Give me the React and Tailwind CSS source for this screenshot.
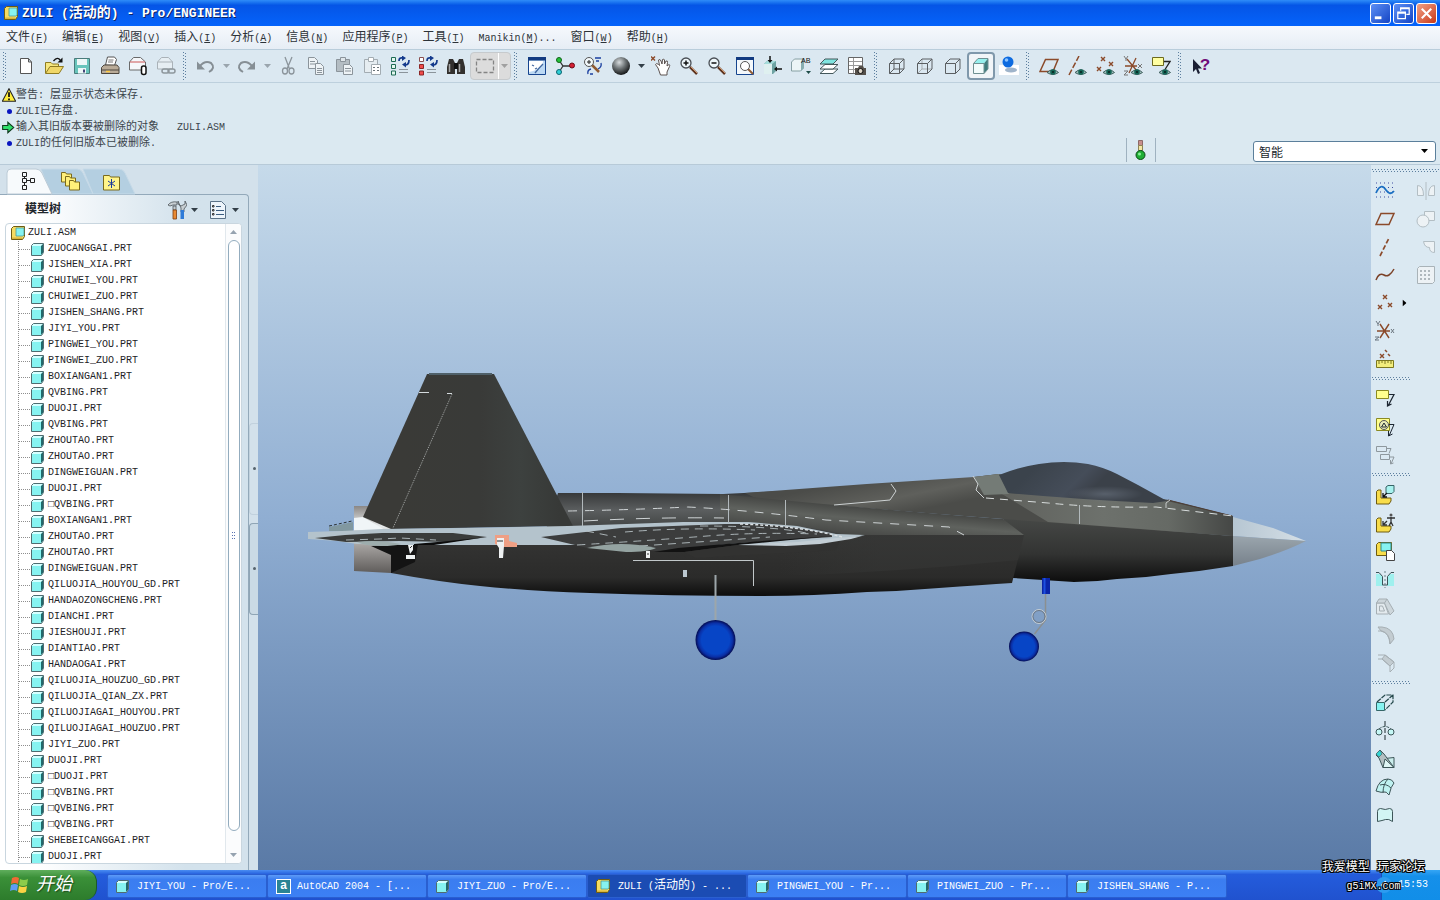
import { Fragment } from 'react';

const parts = [
  'ZUOCANGGAI.PRT', 'JISHEN_XIA.PRT', 'CHUIWEI_YOU.PRT', 'CHUIWEI_ZUO.PRT', 'JISHEN_SHANG.PRT',
  'JIYI_YOU.PRT', 'PINGWEI_YOU.PRT', 'PINGWEI_ZUO.PRT', 'BOXIANGAN1.PRT', 'QVBING.PRT',
  'DUOJI.PRT', 'QVBING.PRT', 'ZHOUTAO.PRT', 'ZHOUTAO.PRT', 'DINGWEIGUAN.PRT',
  'DUOJI.PRT', '□QVBING.PRT', 'BOXIANGAN1.PRT', 'ZHOUTAO.PRT', 'ZHOUTAO.PRT',
  'DINGWEIGUAN.PRT', 'QILUOJIA_HOUYOU_GD.PRT', 'HANDAOZONGCHENG.PRT', 'DIANCHI.PRT', 'JIESHOUJI.PRT',
  'DIANTIAO.PRT', 'HANDAOGAI.PRT', 'QILUOJIA_HOUZUO_GD.PRT', 'QILUOJIA_QIAN_ZX.PRT', 'QILUOJIAGAI_HOUYOU.PRT',
  'QILUOJIAGAI_HOUZUO.PRT', 'JIYI_ZUO.PRT', 'DUOJI.PRT', '□DUOJI.PRT', '□QVBING.PRT',
  '□QVBING.PRT', '□QVBING.PRT', 'SHEBEICANGGAI.PRT', 'DUOJI.PRT',
];

const menus = [
  ['文件', 'F'], ['编辑', 'E'], ['视图', 'V'], ['插入', 'I'], ['分析', 'A'], ['信息', 'N'],
  ['应用程序', 'P'], ['工具', 'T'], ['Manikin', 'M', '...'], ['窗口', 'W'], ['帮助', 'H'],
];

// Latin runs are set smaller than the Chinese ones so that two of them fill one ideograph
const Mixed = ({ text, latin = 'text-[10px]' }) => (
  <span className="whitespace-pre">
    {text.split(/([\x20-\x7e□]+)/).filter(Boolean).map((run, i) => (
      <span key={i} className={/[\x20-\x7e□]/.test(run) ? latin : ''}>{run}</span>
    ))}
  </span>
);

const Svg = ({ children, size = 20, ...rest }) => (
  <svg width={size} height={size} viewBox="0 0 20 20" fill="none" className="shrink-0" aria-hidden="true" {...rest}>
    {children}
  </svg>
);

const PartIcon = ({ className = 'w-[13px] h-[13px]' }) => (
  <svg viewBox="0 0 13 13" className={`shrink-0 ${className}`} aria-hidden="true">
    <path d="M.5 2.500 2.500.5h10v9l-2 3H.5z" fill="#d5ffff" stroke="#4f6c70" />
    <path d="M1 3h9v9H1z" fill="#86f3f1" />
    <path d="M10 3 12 1v8.500L10 12z" fill="#22686b" />
  </svg>
);

const AsmIcon = ({ className = 'w-[14px] h-[14px]' }) => (
  <svg viewBox="0 0 14 14" className={`shrink-0 ${className}`} aria-hidden="true">
    <path d="M.5 2.500 2.500.5h11v10l-2 3H.5z" fill="#f5dc62" stroke="#6e5c12" />
    <path d="M5 2h8v7l-1 1H5z" fill="#86f3f1" stroke="#4f9a98" strokeWidth=".8" />
    <path d="M1 11.500h10V13H1z" fill="#d9b63c" />
  </svg>
);

const Eye = () => (
  <g>
    <path d="M8 16.500Q14 11 19.500 16.500 14 20.500 8 16.500z" fill="#9fc0bd" stroke="#41605f" />
    <circle cx="14" cy="16" r="2.800" fill="#146455" />
    <circle cx="14" cy="16" r="1" fill="#06201c" />
  </g>
);

const Cross = ({ x, y, c = '#8b4a2a' }) => (
  <path d={`M${x - 2} ${y - 2}l4 4m0-4l-4 4`} stroke={c} strokeWidth="1.400" />
);

const Lens = ({ x, y }) => (
  <g>
    <path d={`M${x + 4} ${y + 4}l7 7`} stroke="#5d3420" strokeWidth="2.500" />
    <path d={`M${x + 5} ${y + 4}l6 6`} stroke="#d29a70" />
    <circle cx={x} cy={y} r="5" fill="#eef6fa" stroke="#4a4f55" strokeWidth="1.300" />
  </g>
);

const Refresh = () => (
  <g>
    <path d="M9 5q0-4 4-3M19 4q0 5-4 5" stroke="#143a8c" strokeWidth="1.700" />
    <path d="m12-.5 4 2.500-4 3zM16 6l-4 2.500 4 3z" fill="#143a8c" />
    <path d="M9 13.500h9M9 16.500h9" stroke="#8b949b" />
  </g>
);

const icons = {
  fresh: <path d="M4.500 2.500h8l3 3.500v11.500h-11zM12.500 2.500V6h3" fill="#fff" stroke="#555" />,
  open: (
    <>
      <path d="M1.500 17V6.500H7L8.500 8h6v3" fill="#f6e780" stroke="#8f7c22" />
      <path d="m1.500 17.500 4.500-7h13.500l-4.500 7z" fill="#f0d768" stroke="#8f7c22" />
      <path d="M9.500 5q4-5 7-.5" stroke="#111" strokeWidth="1.300" />
      <path d="M18.500 1.500v5h-5z" fill="#111" />
    </>
  ),
  save: (
    <>
      <path d="M2.500 2.500h15v15h-15z" fill="#69c4bb" stroke="#4a7b7b" />
      <path d="M5 3h10v6H5zM6 12h8v5.500H6z" fill="#eef7f7" />
      <path d="M11 13.500h2v3h-2z" fill="#447" />
    </>
  ),
  print: (
    <>
      <path d="m5.500 9 2-8h7l2 2.500-2 6z" fill="#fff" stroke="#555" />
      <path d="M8.500 4h5M8 6h5" stroke="#777" />
      <path d="M1.500 11.500 4 9h13l2 2.500v6H1.500z" fill="#b9ab98" stroke="#4d463e" />
      <path d="M2 14h17" stroke="#4d463e" />
      <path d="M6 15.500h4" stroke="#fc4" strokeWidth="1.500" />
    </>
  ),
  attach: (
    <>
      <path d="m1.500 6 4-4.500h7l5 4.500v8h-16z" fill="#f5f7fa" stroke="#6a6a6a" />
      <path d="M2 6h15" stroke="#c55" />
      <rect x="13.500" y="10" width="4.500" height="8.500" rx="2" fill="#fff" stroke="#111" strokeWidth="1.500" />
    </>
  ),
  mailLink: (
    <>
      <path d="m1.500 6 4-4.500h7l4 4.500v7h-15z" fill="#e6eef3" stroke="#aab2b8" />
      <path d="M2 6h15" stroke="#aab2b8" />
      <rect x="6" y="13" width="7" height="4" rx="2" stroke="#8d969c" strokeWidth="1.500" />
      <rect x="12" y="13" width="7" height="4" rx="2" stroke="#8d969c" strokeWidth="1.500" />
    </>
  ),
  undo: (
    <>
      <path d="M4 10q5-6 11-3 5 5-2 9" stroke="#868f95" strokeWidth="2" />
      <path d="M1 5.500v8h8z" fill="#868f95" />
    </>
  ),
  redo: (
    <>
      <path d="M16 10Q11 4 5 7q-5 5 2 9" stroke="#868f95" strokeWidth="2" />
      <path d="M19 5.500v8h-8z" fill="#868f95" />
    </>
  ),
  cut: (
    <g stroke="#8b949b" strokeWidth="1.300">
      <path d="m7 1 4.500 12M14 1 9 13" />
      <ellipse cx="7" cy="15" rx="2.500" ry="3" />
      <ellipse cx="13.500" cy="15" rx="2.500" ry="3" />
    </g>
  ),
  copy: (
    <g stroke="#8b949b" fill="#eef3f6">
      <path d="M2.500 1.500h6l3 3v8h-9zM4 5.500h5M4 8h5" />
      <path d="M9.500 7.500h5l3 3v8h-8zM11 12.500h5M11 14.500h5M11 16.500h5" />
    </g>
  ),
  paste: (
    <g stroke="#8b949b">
      <path d="M2.500 3.500h13v12h-13z" fill="#b4bdc3" />
      <path d="M6.500 1.500h5v4h-5z" fill="#dfe6ea" />
      <path d="M9.500 8.500h6l3 3v7h-9zM11 12.500h6M11 15h6" fill="#eef3f6" />
    </g>
  ),
  pasteSpecial: (
    <g stroke="#a3acb2">
      <path d="M2.500 3.500h13v13h-13z" fill="#e6edf1" />
      <path d="M6.500 1.500h5v4h-5z" fill="#fff" />
      <path d="M9.500 8.500h9v10h-9z" fill="#fff" />
      <path d="M11 11.500h2M11 14.500h2M15 11.500h2M15 14.500h2" stroke="#6b747a" />
    </g>
  ),
  regen: (
    <>
      <path d="M1.500 1.500h4v4h-4zM1.500 8.500h4v4h-4zM1.500 15h4v4h-4z" fill="#e4f7ef" stroke="#1e6b54" />
      <Refresh />
    </>
  ),
  regenManage: (
    <>
      <path d="M1.500 1.500h4v4h-4z" fill="#fff" stroke="#8a5050" />
      <path d="M1.500 8.500h4v4h-4zM1.500 15h4v4h-4z" fill="#ef4b4b" stroke="#8c2626" />
      <Refresh />
    </>
  ),
  find: (
    <>
      <path d="M3 3h4l2 4v11H1v-7zM17 3h-4l-2 4v11h8v-7z" fill="#33302e" />
      <path d="M8 7h4v6H8z" fill="#111" />
      <path d="M3.500 8v8M13.500 8v8" stroke="#a9a9a9" strokeWidth="1.500" />
    </>
  ),
  select: <path d="M1.500 3.500h17v13h-17z" stroke="#848484" strokeWidth="1.300" strokeDasharray="4 2" />,
  repaint: (
    <>
      <path d="M1.500 1.500h17v17h-17z" fill="#bcd9f4" stroke="#16458f" />
      <path d="M1 1h18v3.500H1z" fill="#123a80" />
      <path d="M2 5h14q0 8-14 11z" fill="#fff" />
      <path d="M8 17q3-4 8-9M5 9l2 1m1 3 2-1" stroke="#4268a0" strokeWidth="1.300" />
    </>
  ),
  spin: (
    <>
      <path d="m4 4 4 6h9M8 10l-4 6" stroke="#333" strokeWidth="1.300" />
      <circle cx="4" cy="4" r="2.500" fill="#22c43a" stroke="#106018" />
      <circle cx="17" cy="9.500" r="2.500" fill="#d42034" stroke="#6d0c18" />
      <circle cx="4" cy="16" r="2.500" fill="#2fd0d8" stroke="#0e6470" />
    </>
  ),
  orient: (
    <>
      <path d="m9 9 7 7" stroke="#8f5b34" strokeWidth="2.500" />
      <circle cx="6" cy="6" r="4.500" fill="#f2f8fb" stroke="#555" />
      <path d="M6 4v4M4 6h4" stroke="#222" />
      <path d="M12 2h6M13 5h3M18 7q1 4-3 6M5 18q-1-4 3-5M10 18h-3" stroke="#1b3fa0" strokeWidth="1.300" />
    </>
  ),
  ball: (
    <>
      <defs>
        <radialGradient id="ball" cx=".4" cy=".3" r=".7">
          <stop offset="0" stopColor="#d8dcde" /><stop offset=".5" stopColor="#6d7375" /><stop offset="1" stopColor="#151718" />
        </radialGradient>
      </defs>
      <circle cx="10" cy="10" r="9" fill="url(#ball)" />
    </>
  ),
  pan: (
    <>
      <Cross x={2} y={2.5} />
      <path d="M7 12 4.500 8.500q1-2 3 0l1 1L7.500 4q1.500-1.500 2.500 1l1 3 .5-4.500q1.500-1 2 .5v4l1.500-3q2-.5 1.500 1.500L16 10l2-1.500q1.500.5.500 2L16 16v3H9.500z" fill="#fff" stroke="#5c5250" />
    </>
  ),
  zoomIn: <><Lens x={7} y={7} /><path d="M7 4.500v5M4.500 7h5" stroke="#111" strokeWidth="1.500" /></>,
  zoomOut: <><Lens x={7} y={7} /><path d="M4.500 7h5" stroke="#111" strokeWidth="1.500" /></>,
  refit: (
    <>
      <path d="M1.500 1.500h17v17h-17z" fill="#f4f8fb" stroke="#16458f" />
      <path d="M1 1h18v3H1z" fill="#123a80" />
      <path d="m13 13 5 5" stroke="#8f5b34" strokeWidth="2" />
      <circle cx="10" cy="10" r="4.500" stroke="#555" fill="#fff" />
    </>
  ),
  reorient: (
    <>
      <path d="m1 8 3-3h9v10l-3 3H1z" fill="#6fa3a3" />
      <path d="m1 8 3-3h9l-4 3z" fill="#a5dcdb" />
      <path d="M1 8h8v10H1z" fill="#dff0f0" />
      <path d="M7 0v4M19 13h-5" stroke="#111" strokeWidth="1.500" />
      <path d="M4.500 4h5L7 7zM14 10.500v5L11 13z" fill="#111" />
    </>
  ),
  saved: (
    <>
      <path d="m.5 6 3-3h9v9l-3 3h-9z" fill="#ecf5f6" stroke="#87a0a4" />
      <path d="m10 6 3-3v9l-3 3z" fill="#88adb0" />
      <text x="10" y="7" className="text-[8px]" fill="#222">AB</text>
      <path d="M15 15h5l-2.500 3z" fill="#1e4c48" />
    </>
  ),
  layers: (
    <g stroke="#44585b">
      <path d="m1 17.500 5-4.500h13l-5 4.500z" fill="#fff" />
      <path d="m1 13 5-4.500h13L14 13z" fill="#fff" />
      <path d="m1 8 5-5h13l-5 5z" fill="#7fe4df" />
    </g>
  ),
  viewMgr: (
    <>
      <path d="M1.500 1.500h14v16h-14z" fill="#fff" stroke="#666" />
      <path d="M2 5.500h13M2 9.500h13M2 13.500h13M6.500 2v15" stroke="#999" />
      <path d="M8 12h3l1-2h4l1 2h2v7H8z" fill="#55504a" />
      <circle cx="13.500" cy="15" r="2.500" fill="#ded6c8" stroke="#111" />
    </>
  ),
  wire: <path d="M2.500 7.500h10v10h-10zM7 3h10v10H7zM2.500 7.500 7 3M12.500 7.500 17 3M12.500 17.500 17 13M2.500 17.500 7 13" stroke="#5b5f62" />,
  hidden: (
    <>
      <path d="M7 3v10h10M2.500 17.500 7 13" stroke="#a7adb1" />
      <path d="M2.500 7.500h10v10h-10zM2.500 7.500 7 3h10v10l-4.500 4.500M12.500 7.500 17 3" stroke="#5b5f62" />
    </>
  ),
  noHidden: <path d="M2.500 7.500h10v10h-10zM2.500 7.500 7 3h10v10l-4.500 4.500M12.500 7.500 17 3" stroke="#5b5f62" />,
  shade: (
    <>
      <path d="m2.500 7.500 4.500-5h10l-4 5z" fill="#96f0ee" />
      <path d="m13 7.500 4-5V13l-4 4.500z" fill="#3f7d7e" />
      <path d="M2.500 7.500H13v10H2.500z" fill="#f2fbfb" stroke="#6f9092" />
      <path d="m2.500 7.500 4.500-5h10V13l-4 4.500" stroke="#6f9092" />
    </>
  ),
  enhanced: (
    <>
      <path d="M0 9h20v10H0z" fill="#fff" />
      <ellipse cx="12" cy="14" rx="6" ry="2.500" fill="#9fb4ca" />
      <circle cx="9" cy="6" r="5.500" fill="#0d6be0" />
      <circle cx="7.500" cy="4" r="1.800" fill="#8cc4ff" />
    </>
  ),
  planeEye: <><path d="M1 15.500 6.500 3.500H19L14 15.500z" stroke="#8b4a2a" strokeWidth="1.500" /><Eye /></>,
  axisEye: <><path d="m2 19 10-19" stroke="#8b4a2a" strokeWidth="1.500" strokeDasharray="6 2" /><Eye /></>,
  pointEye: <><Cross x={8} y={3} /><Cross x={16} y={8} /><Cross x={4} y={13} /><Eye /></>,
  csysEye: (
    <>
      <path d="m4 3 10 12M13 2 6 17M2 10h12" stroke="#8b4a2a" strokeWidth="1.300" />
      <path d="m1 0 2 3 2-3M3 3v2M15 8l4 4m0-4-4 4M1 15h4l-4 4h4" stroke="#777" />
      <Eye />
    </>
  ),
  noteEye: (
    <>
      <path d="M1.500 1.500h11v8h-11z" fill="#ffffa2" stroke="#6d6a1e" />
      <path d="M13 5.500h6l-5 8" stroke="#222" strokeWidth="1.300" />
      <Eye />
    </>
  ),
  help: (
    <>
      <path d="M2 3v13l3-3 2 5 2-1-2-4.500h4z" fill="#1a1f33" />
      <text x="9" y="14" className="text-[17px] font-bold" fill="#6f0c78">?</text>
    </>
  ),
};

const side = {
  sketch: (
    <>
      <path d="M1 2h18M1 6.500h18M1 11h18M1 16h18" stroke="#3c4ca0" strokeDasharray="1 3" />
      <path d="M1 12q5-11 10-3 4 6 8 1" stroke="#1b6fc2" strokeWidth="1.800" />
    </>
  ),
  plane: <path d="M1 15.500 6 4.500h13l-5 11z" stroke="#8b4a2a" strokeWidth="1.500" />,
  axis: <path d="m5 19 9-18" stroke="#8b4a2a" strokeWidth="1.700" strokeDasharray="5 2" />,
  curve: <path d="M1 15q3-8 8-5t10-6" stroke="#7b4228" strokeWidth="1.500" />,
  points: <><Cross x={10} y={4} /><Cross x={5} y={14} /><Cross x={15} y={12} /></>,
  csys: (
    <>
      <path d="m5 3 9 14M14 3 5 17M2 10h13" stroke="#8b4a2a" strokeWidth="1.400" />
      <path d="m1 0 2 3 2-3M3 3v2M16 8l3 4m0-4-3 4M0 16h4l-4 3h4" stroke="#6c7780" />
    </>
  ),
  analysis: (
    <>
      <Cross x={7} y={7} /><path d="m10 1 2 2M13 5l2 2" stroke="#8b4a2a" strokeWidth="1.500" />
      <path d="M1.500 11.500h17v7h-17z" fill="#f3ee7c" stroke="#7c7820" />
      <path d="M4 12v3M7 12v2M10 12v3M13 12v2M16 12v3" stroke="#7c7820" />
    </>
  ),
  note: (
    <>
      <path d="M1.500 1.500h12v8h-12z" fill="#ffff8e" stroke="#8b8a22" />
      <path d="M14 5.500h5L13 17M12.500 12v5l4-2" stroke="#1b2530" strokeWidth="1.200" />
    </>
  ),
  noteFind: (
    <>
      <path d="M1.500 1.500h13v12h-13z" fill="#ffff8e" stroke="#8b8a22" />
      <circle cx="9" cy="8" r="4.500" stroke="#555" fill="#e8ecb8" />
      <path d="m6.500 10 2.500-4 2.500 4zM14 7.500h5L14 19M13.500 14v5l4-2" stroke="#1b2530" />
    </>
  ),
  notes: <path d="M1.500 1.500h10v5h-10zM5.500 9.500h9v5h-9zM12 3.500h4l-2 5M15 12h4l-3 7M15.500 15v4l3-1" stroke="#8e989e" />,
  assemble: (
    <>
      <path d="M1.500 6.500 3 5h3v8h10v3l-2 3H1.500z" fill="#f8dd4b" stroke="#6e5c12" />
      <path d="m11 2 2-1.500h6v6l-2 2h-6z" fill="#a8f2ef" stroke="#376466" />
      <path d="m12 8-4 4m0-4v4h4" stroke="#111" strokeWidth="1.300" />
    </>
  ),
  manikin: (
    <>
      <path d="M1.500 6.500 3 5h3v8h10v3l-2 3H1.500z" fill="#f8dd4b" stroke="#6e5c12" />
      <circle cx="16" cy="2" r="1.500" fill="#555" />
      <path d="M12 5h8M16 4v5l-2 4M16 9l2 4M12 8l-4 4m0-4v4h4" stroke="#333" strokeWidth="1.300" />
    </>
  ),
  create: (
    <>
      <path d="m1.500 3.500 2-2h13v10l-2 3h-13z" fill="#f8dd4b" stroke="#6e5c12" />
      <path d="M6 2h10v8H6z" fill="#86f3f1" stroke="#2f8a8c" />
      <path d="M11.500 9.500h5l3 3v7h-8z" fill="#fff" stroke="#444" />
    </>
  ),
  hole: (
    <>
      <path d="M1 5h4l3 3v9H1zM19 5h-4l-3 3v9h7z" fill="#9ff0ee" />
      <path d="M1 3.500h3l3.500 4V16h5V7.500l3.500-4h3" stroke="#3c5358" />
      <path d="M10 2v17" stroke="#6a8489" strokeDasharray="2 2" />
    </>
  ),
  shell: (
    <g stroke="#a6afb4">
      <path d="M1.500 6h8l4 11h-12z" fill="#e3eaee" />
      <path d="M4 2h8l7 12-4 4L9.500 6H1.500zM12 2 9.500 6" fill="#cdd6db" />
      <path d="M4.500 9h3l2 5h-5z" />
    </g>
  ),
  round: (
    <g stroke="#a6afb4">
      <path d="M3 2h4q11 1 12 12l-4 5q0-11-9-13z" fill="#c3ccd1" />
      <path d="M3 6h4q7 2 8 13" />
    </g>
  ),
  chamfer: (
    <g stroke="#a6afb4">
      <path d="M10 2 7 6l8 7 4-4z" fill="#c3ccd1" />
      <path d="M3 2h7l9 7v6l-4 4v-6L7 6H3" />
    </g>
  ),
  extrude: (
    <>
      <path d="m2 9 8-7h8v7l-8 8M10 9l8-7" stroke="#24484b" strokeWidth="1.200" strokeDasharray="5 1" />
      <path d="M1.500 9.500h8v8h-8z" fill="#86f3f1" stroke="#356769" />
    </>
  ),
  revolve: (
    <>
      <path d="M10 0v20" stroke="#1d2a2e" strokeDasharray="5 2" />
      <circle cx="4" cy="11" r="3" fill="#c5f8f6" stroke="#3d5659" /><circle cx="16" cy="11" r="3" fill="#c5f8f6" stroke="#3d5659" />
      <path d="M4 8q6-5 12 0" stroke="#3d5659" strokeDasharray="3 1" />
    </>
  ),
  sweep: (
    <>
      <path d="M10 9.500 19 8.500v10H8z" fill="#cbeeed" stroke="#3d5659" />
      <path d="M1 6 4 9l4 9.500h11L9 5 5 1z" fill="#b3bfc2" stroke="#3d5659" />
      <path d="m10 10 9 8.500H8z" fill="#dff6f5" stroke="#3d5659" />
      <path d="m1 5 4-4 2 4-3 3z" fill="#34d3d2" stroke="#3d5659" strokeWidth=".6" />
    </>
  ),
  boundary: <path d="M1 14Q4 2 13 2q4 0 6 4-3 3-5 12-3-4-5-3t-8-1zM5 8q6-2 11 3M8 16q0-9 5-14" fill="#bff2f1" stroke="#3d5659" />,
  fill: <path d="M2.500 16.500v-10q0-3 3-3 5 2 9 0 3 0 3 3v10q-4-3-7-2t-8 2z" fill="#d2f5f4" stroke="#3d5659" />,
  mirror: <path d="M10 1v18M1.500 4.500q6 0 6 10h-6zM18.500 4.500q-6 0-6 10h6z" fill="#edf2f5" stroke="#b3bec4" />,
  merge: <><path d="M8.500 2.500h10v9h-10z" fill="#edf2f5" stroke="#b3bec4" /><circle cx="7" cy="12" r="6" fill="#edf2f5" stroke="#b3bec4" /></>,
  trim: <path d="M7.500 4.500h11v11q-5 0-5-5-5 0-6-6z" fill="#edf2f5" stroke="#b3bec4" />,
  pattern: (
    <>
      <path d="m1.500 3.500 2-2h15v15l-2 2h-15z" fill="#edf2f5" stroke="#a9b3b8" />
      <path d="M4 6h12M4 10h12M4 14h12" stroke="#9ba5aa" strokeWidth="1.500" strokeDasharray="2 2" />
    </>
  ),
};

const toolbar = [
  ['新建', 'fresh'], ['打开', 'open'], ['保存', 'save'], ['打印', 'print'], ['发送附件', 'attach'], ['发送链接', 'mailLink', 'off'],
  'grip',
  ['撤消', 'undo', 'off'], 'arrowOff', ['重做', 'redo', 'off'], 'arrowWide', ['剪切', 'cut', 'off'], ['复制', 'copy', 'off'],
  ['粘贴', 'paste', 'off'], ['选择性粘贴', 'pasteSpecial', 'off'], ['再生', 'regen'], ['再生管理器', 'regenManage'], ['查找', 'find'], 'select',
  'grip',
  ['重画', 'repaint'], ['旋转中心', 'spin'], ['定向模式', 'orient'], ['外观库', 'ball'], 'arrow', ['平移', 'pan'], ['放大', 'zoomIn'],
  ['缩小', 'zoomOut'], ['重新调整', 'refit'], ['重定向', 'reorient'], ['已命名视图', 'saved'], ['层', 'layers'], ['视图管理器', 'viewMgr'],
  'grip',
  ['线框', 'wire'], ['隐藏线', 'hidden'], ['消隐', 'noHidden'], ['着色', 'shade', 'on'], ['增强的真实感', 'enhanced'],
  'grip',
  ['基准平面开/关', 'planeEye'], ['基准轴开/关', 'axisEye'], ['基准点开/关', 'pointEye'], ['坐标系开/关', 'csysEye'], ['注释开/关', 'noteEye'],
  'grip',
  ['上下文帮助', 'help'],
];

const sideGroups = [
  [['草绘', 'sketch'], ['平面', 'plane'], ['轴', 'axis'], ['曲线', 'curve'], ['点', 'points'], ['坐标系', 'csys'], ['分析', 'analysis']],
  [['注释', 'note'], ['查找注释', 'noteFind'], ['全部注释', 'notes']],
  [['装配', 'assemble'], ['人体模型', 'manikin'], ['创建', 'create'], ['孔', 'hole'], ['壳', 'shell'], ['倒圆角', 'round'], ['倒角', 'chamfer']],
  [['拉伸', 'extrude'], ['旋转', 'revolve'], ['扫描', 'sweep'], ['边界混合', 'boundary'], ['填充', 'fill']],
];

const tasks = [
  ['part', 'JIYI_YOU - Pro/E...'], ['cad', 'AutoCAD 2004 - [...'], ['part', 'JIYI_ZUO - Pro/E...'],
  ['asm', 'ZULI (活动的) - ...'], ['part', 'PINGWEI_YOU - Pr...'], ['part', 'PINGWEI_ZUO - Pr...'], ['part', 'JISHEN_SHANG - P...'],
];

const Arrow = ({ className = 'text-[#333f48]' }) => (
  <svg width="7" height="4" viewBox="0 0 7 4" className={`shrink-0 ${className}`} aria-hidden="true"><path d="M0 0h7L3.500 4z" fill="currentColor" /></svg>
);

const Grip = () => (
  <div className="w-3 shrink-0 flex items-center pl-[3px]">
    <svg width="4" height="28" aria-hidden="true"><path d="M.5 0v28M2.500 1v28" stroke="#5d7f9f" strokeDasharray="1 2" /></svg>
  </div>
);

const SideGrip = ({ className = 'w-[41px]' }) => (
  <div className={`h-3 flex items-center px-px ${className}`}>
    <svg height="4" className="w-full" aria-hidden="true"><path d="M0 .5h80M1 2.500h80" stroke="#5d7f9f" strokeDasharray="1 2" /></svg>
  </div>
);

const ToolButton = ({ label, children, pressed }) => (
  <button
    type="button"
    aria-label={label}
    className={`size-7 shrink-0 flex items-center justify-center ${pressed ? 'rounded-sm border-2 border-[#7f98ab] bg-[#f1f5f8]' : ''}`}
  >
    {children}
  </button>
);

const TitleBar = () => (
  <header className="h-[26px] shrink-0 flex items-center justify-between pl-1 pr-[3px] bg-linear-to-b from-[#2f8cf8] via-[#0555e6] via-20% to-[#0563fb]">
    <div className="flex items-center gap-1">
      <AsmIcon />
      <h1 className="text-sm leading-5 font-bold text-white [text-shadow:1px_1px_0_#0a246a]">
        <Mixed text="ZULI (活动的) - Pro/ENGINEER" latin="text-[13px]" />
      </h1>
    </div>
    <div className="flex gap-0.5">
      <button type="button" aria-label="最小化" className="size-[21px] rounded-[3px] border border-white bg-linear-to-br from-[#5d8ff5] to-[#1543c4] flex items-center justify-center">
        <Svg size="19"><path d="M4 13h7v3H4z" fill="#fff" /></Svg>
      </button>
      <button type="button" aria-label="还原" className="size-[21px] rounded-[3px] border border-white bg-linear-to-br from-[#5d8ff5] to-[#1543c4] flex items-center justify-center">
        <Svg size="19"><path d="M7 7V4h9v7h-3M7 5h9M4 8.500h8v7H4zM4 9.500h8" stroke="#fff" strokeWidth="1.300" /></Svg>
      </button>
      <button type="button" aria-label="关闭" className="size-[21px] rounded-[3px] border border-white bg-linear-to-br from-[#f0a085] to-[#c8340e] flex items-center justify-center">
        <Svg size="19"><path d="m5 5 10 10M15 5 5 15" stroke="#fff" strokeWidth="2.200" /></Svg>
      </button>
    </div>
  </header>
);

const MenuBar = () => (
  <nav className="h-6 shrink-0 flex items-center gap-3.5 pl-1.5 pt-0.5 bg-linear-to-b from-[#f6f9fd] to-[#e6edf5] border-b border-[#b9cddb] text-xs leading-4 text-[#2c3238]">
    {menus.map(([name, key, tail = '']) => (
      <button type="button" key={key} className="whitespace-nowrap">
        <Mixed text={name} />
        <span className="text-[10px]">(<u>{key}</u>){tail}</span>
      </button>
    ))}
  </nav>
);

const Toolbar = () => (
  <div className="h-[33px] shrink-0 flex items-center bg-[#dbe8f1] border-b border-[#bdd0dd]">
    <Grip />
    {toolbar.map((item, i) => {
      if (item === 'grip') return <Grip key={i} />;
      if (item === 'arrow') return <button type="button" key={i} aria-label="外观选项" className="w-3 h-7 flex items-center justify-center"><Arrow /></button>;
      if (item === 'arrowOff') return <button type="button" key={i} aria-label="撤消列表" className="w-3 h-7 flex items-center justify-center"><Arrow className="text-[#9aa5ad]" /></button>;
      if (item === 'arrowWide') return <button type="button" key={i} aria-label="重做列表" className="w-3.5 h-7 flex items-center justify-center"><Arrow className="text-[#9aa5ad]" /></button>;
      if (item === 'select') {
        return (
          <div key={i} className="flex bg-[#dcdcdc] border border-[#c6cacd] rounded-sm">
            <button type="button" aria-label="选择框" className="w-[27px] h-[26px] flex items-center justify-center"><Svg>{icons.select}</Svg></button>
            <button type="button" aria-label="选择选项" className="w-3 flex items-center justify-center border-l border-white"><Arrow className="text-[#a0a0a0]" /></button>
          </div>
        );
      }
      const [label, icon, state] = item;
      return <ToolButton key={i} label={label} pressed={state === 'on'}><Svg>{icons[icon]}</Svg></ToolButton>;
    })}
  </div>
);

const Messages = () => (
  <section className="h-[82px] shrink-0 flex justify-between bg-[#dbe9f1] border-b border-[#b7cad8]">
    <ul className="pt-1 pl-0.5 text-[11px] leading-4 text-[#3b454c]">
      <li className="flex items-center h-4">
        <span className="w-3.5 shrink-0"><Svg size="14"><path d="M10 1 19.500 19H.5z" fill="#ffee3c" stroke="#222" strokeWidth="1.500" /><path d="M10 6v7M10 15v2.500" stroke="#111" strokeWidth="2.500" /></Svg></span>
        <Mixed text="警告: 层显示状态未保存." />
      </li>
      <li className="flex items-center h-4">
        <span className="w-3.5 shrink-0 flex justify-center"><i className="size-[5px] rounded-full bg-[#0a16c0]" /></span>
        <Mixed text="ZULI已存盘." />
      </li>
      <li className="flex items-center h-4">
        <span className="w-3.5 shrink-0"><Svg size="13"><path d="M1 7h8V2l9 8-9 8v-5H1z" fill="#2fe06b" stroke="#123c20" strokeWidth="1.700" /></Svg></span>
        <Mixed text="输入其旧版本要被删除的对象   ZULI.ASM" />
      </li>
      <li className="flex items-center h-4">
        <span className="w-3.5 shrink-0 flex justify-center"><i className="size-[5px] rounded-full bg-[#0a16c0]" /></span>
        <Mixed text="ZULI的任何旧版本已被删除." />
      </li>
    </ul>
    <div className="flex items-end pb-0.5 pr-1">
      <div className="w-[30px] h-6 mr-[97px] border-x border-[#9fb2c0] flex items-center justify-center">
        <svg width="12" height="20" viewBox="0 0 12 20" aria-hidden="true">
          <path d="M3.500.5h4v5h-4z" fill="#c78f8c" stroke="#8d6967" />
          <path d="M3.500 5.500h4v5h-4z" fill="#f3e6a4" stroke="#8d8455" />
          <circle cx="5.500" cy="15" r="4.500" fill="#1fae35" stroke="#0b4a16" />
          <circle cx="4.500" cy="14" r="1.500" fill="#8cf09a" />
        </svg>
      </div>
      <div className="relative w-[183px]">
        <select
          aria-label="过滤器"
          className="block w-full h-[21px] appearance-none rounded-[3px] border border-[#5b7f9b] bg-white p-0 pl-[5px] text-xs leading-[18px] text-[#20262b] [font-family:'Noto_Sans_CJK_SC',sans-serif]"
        >
          <option>智能</option>
        </select>
        <Arrow className="absolute right-2 top-2 pointer-events-none" />
      </div>
    </div>
  </section>
);

const Tab = ({ label, active, className, children }) => (
  <button type="button" role="tab" aria-label={label} aria-selected={!!active} className={`relative w-[42px] h-[27px] ${className}`}>
    <svg viewBox="0 0 42 27" className="w-full h-full overflow-visible" fill="none">
      <path
        d={active ? 'M0 27V6q0-4 4-4h25q4 0 6 4l10 21z' : 'M-8 2h36q4 0 6 4l10 21H2z'}
        fill={active ? '#f7fafc' : '#b4cfe1'}
        stroke={active ? '#bccbd6' : '#c6dae8'}
      />
      {children}
    </svg>
  </button>
);

const ModelTree = () => (
  <aside className="w-[249px] shrink-0 flex flex-col bg-[#d3e1eb]">
    <div role="tablist" className="flex pt-0.5 pl-[7px]">
      <Tab label="模型树" active className="z-30">
        <path d="M15.500 5.500h4v4h-4zM15.500 11.500h4v4h-4zM23.500 11.500h4v4h-4zM15.500 18.500h4v4h-4zM17.500 9.500v2M19.500 13.500h4M17.500 15.500v3" stroke="#222" />
      </Tab>
      <Tab label="文件夹" className="z-20">
        {[[12, 5], [16, 9], [20, 13]].map(([x, y]) => (
          <path key={x} d={`M${x}.5 ${y}.5h4l1 1.500h5v8h-10z`} fill="#fff07a" stroke="#7a6a1c" />
        ))}
      </Tab>
      <Tab label="收藏夹" className="z-10">
        <path d="M12.500 8.500h6l1 1.500h9v13h-16z" fill="#fff48a" stroke="#7a6a1c" />
        <path d="M20.500 12v9M17 14l7 5M24 14l-7 5" stroke="#1b3a9c" />
      </Tab>
    </div>
    <div className="flex-1 min-h-0 flex flex-col border-t border-r border-[#93a9ba] rounded-tr bg-linear-to-r from-white from-15% to-[#d3e2ec] to-75%">
      <div className="h-7 shrink-0 flex items-center pl-[25px] pr-[9px] pt-0.5 text-xs leading-4">
        <h2 className="font-bold text-[#1f262c] mr-auto">模型树</h2>
        <button type="button" aria-label="设置" className="flex items-center gap-1 mr-2.5">
          <Svg>
            <path d="M1 5q3-4 9-3v3H6L3 6zM6 6h3v4H6z" fill="#c7ced2" stroke="#4c5459" strokeWidth=".8" />
            <path d="M6 10h3.500v9H6z" fill="#e98a33" stroke="#7c3e10" strokeWidth=".8" />
            <path d="M11 1v3l3 2 4-2V1l2 4-3 4v3h-3V8z" fill="#c7ced2" stroke="#4c5459" strokeWidth=".8" />
            <path d="M13.500 10h3.500v9h-3.500z" fill="#2f7bd8" />
          </Svg>
          <Arrow />
        </button>
        <button type="button" aria-label="显示" className="flex items-center gap-1">
          <Svg>
            <path d="M2.500 1.500h11l4 4v13h-15z" fill="#eef5fb" stroke="#5b7288" />
            <path d="M8 6.500h5M8 10.500h8M8 14.500h8" stroke="#3b5d80" />
            <path d="M4.500 5.500h1.500v1.500H4.500zM4.500 9.500h1.500V11H4.500zM4.500 13.500h1.500V15H4.500z" stroke="#333" />
          </Svg>
          <Arrow />
        </button>
      </div>
      <div className="flex-1 min-h-0 ml-[5px] mr-1.5 mb-1.5 flex border border-[#c9d6df] rounded bg-white overflow-hidden">
        <ul className="flex-1 min-w-0 pt-px text-[10px] leading-4 text-[#1d2226]">
          <li className="h-4 flex items-center gap-[3px] pl-[5px]"><AsmIcon />ZULI.ASM</li>
          {parts.map((name, i) => (
            <li key={i} className="h-4 flex items-center pl-3">
              <svg width="13" height="16" className="shrink-0" aria-hidden="true">
                <path d="M.5 0v16M1 8.500h12" stroke="#8e8e8e" strokeDasharray="1 1" fill="none" />
              </svg>
              <PartIcon />
              <span className="pl-1 whitespace-nowrap">{name}</span>
            </li>
          ))}
        </ul>
        <div className="w-4 shrink-0 flex flex-col items-center border-l border-[#e1e8ed] bg-[#fbfcfd]">
          <button type="button" aria-label="向上滚动" className="h-4 flex items-center"><Arrow className="rotate-180 text-[#96a3b0]" /></button>
          <div className="flex-1 w-3 rounded-full border border-[#93acbe] bg-white flex items-center justify-center text-[#5872b0]">
            <svg width="4" height="8" aria-hidden="true"><path d="M0 .5h4M0 3.500h4M0 6.500h4" stroke="currentColor" strokeDasharray="1 1" /></svg>
          </div>
          <button type="button" aria-label="向下滚动" className="h-4 mt-4 flex items-center"><Arrow className="text-[#96a3b0]" /></button>
        </div>
      </div>
    </div>
  </aside>
);

const Splitter = () => (
  <div className="w-[9px] shrink-0 flex flex-col justify-center gap-2 pt-0.5 bg-[#d3e1eb]">
    <button type="button" aria-label="折叠树" className="h-[92px] border border-r-0 border-[#c1d1dd] rounded-l flex items-center justify-center"><i className="size-[3px] rounded-full bg-[#56636d]" /></button>
    <button type="button" aria-label="展开树" className="h-[92px] border border-r-0 border-[#8fa5b5] rounded-l bg-[#cadae5] flex items-center justify-center"><i className="size-[3px] rounded-full bg-[#56636d]" /></button>
  </div>
);

const Aircraft = () => (
  <svg viewBox="258 165 1113 705" className="w-full h-full" fill="none" role="img" aria-label="ZULI.ASM">
    <defs>
      <linearGradient id="belly" x1="0" y1="535" x2="0" y2="596" gradientUnits="userSpaceOnUse">
        <stop offset="0" stopColor="#353534" /><stop offset=".7" stopColor="#2b2b2a" /><stop offset="1" stopColor="#0d0d0d" />
      </linearGradient>
      <linearGradient id="intake" x1="780" y1="0" x2="880" y2="0" gradientUnits="userSpaceOnUse">
        <stop offset="0" stopColor="#373837" stopOpacity="0" /><stop offset="1" stopColor="#373837" />
      </linearGradient>
      <linearGradient id="spine" x1="0" y1="492" x2="0" y2="528" gradientUnits="userSpaceOnUse">
        <stop offset="0" stopColor="#353738" /><stop offset=".5" stopColor="#5b5e5f" /><stop offset="1" stopColor="#414343" />
      </linearGradient>
      <linearGradient id="shoulder" x1="860" y1="480" x2="868" y2="520" gradientUnits="userSpaceOnUse">
        <stop offset="0" stopColor="#4b4c49" /><stop offset=".6" stopColor="#5f605c" /><stop offset="1" stopColor="#4b4c49" />
      </linearGradient>
      <linearGradient id="duct" x1="860" y1="503" x2="857" y2="538" gradientUnits="userSpaceOnUse">
        <stop offset="0" stopColor="#3f403e" /><stop offset=".45" stopColor="#5f625e" /><stop offset="1" stopColor="#434442" />
      </linearGradient>
      <linearGradient id="front" x1="974" y1="0" x2="1233" y2="0" gradientUnits="userSpaceOnUse">
        <stop offset="0" stopColor="#5c5d59" /><stop offset=".5" stopColor="#6d716c" /><stop offset=".75" stopColor="#666a65" /><stop offset="1" stopColor="#454745" />
      </linearGradient>
      <linearGradient id="chin" x1="0" y1="520" x2="0" y2="582" gradientUnits="userSpaceOnUse">
        <stop offset="0" stopColor="#454745" /><stop offset=".55" stopColor="#323332" /><stop offset="1" stopColor="#0d0d0d" />
      </linearGradient>
      <linearGradient id="glass" x1="1040" y1="462" x2="1080" y2="502" gradientUnits="userSpaceOnUse">
        <stop offset="0" stopColor="#3b434c" /><stop offset=".7" stopColor="#454d59" /><stop offset="1" stopColor="#3b4149" />
      </linearGradient>
      <radialGradient id="shine">
        <stop offset="0" stopColor="#6b7481" stopOpacity=".6" /><stop offset="1" stopColor="#6b7481" stopOpacity="0" />
      </radialGradient>
      <linearGradient id="nozzle" x1="0" y1="506" x2="0" y2="573" gradientUnits="userSpaceOnUse">
        <stop offset="0" stopColor="#8a8785" /><stop offset=".3" stopColor="#e8ebec" /><stop offset=".6" stopColor="#a3a09e" /><stop offset="1" stopColor="#5f5c5a" />
      </linearGradient>
      <linearGradient id="fin" x1="400" y1="0" x2="560" y2="0" gradientUnits="userSpaceOnUse">
        <stop offset="0" stopColor="#3a3a37" /><stop offset=".5" stopColor="#393a38" /><stop offset=".75" stopColor="#3d413f" /><stop offset="1" stopColor="#373937" />
      </linearGradient>
      <linearGradient id="noseUp" x1="1233" y1="0" x2="1306" y2="0" gradientUnits="userSpaceOnUse">
        <stop offset="0" stopColor="#b6c6d2" /><stop offset="1" stopColor="#d5dfe6" />
      </linearGradient>
      <linearGradient id="noseDown" x1="0" y1="538" x2="0" y2="566" gradientUnits="userSpaceOnUse">
        <stop offset="0" stopColor="#98a3ab" /><stop offset="1" stopColor="#77818b" />
      </linearGradient>
      <radialGradient id="tyre">
        <stop offset=".7" stopColor="#0745c6" /><stop offset=".85" stopColor="#0a2fa6" /><stop offset="1" stopColor="#040b52" />
      </radialGradient>
    </defs>

    {/* nozzle and rear body */}
    <path d="m329 527 24-5v9h-24z" fill="#8198a0" />
    <path d="m329 526 23-5" stroke="#2c3336" strokeDasharray="3 2" />
    <path d="M354 506h37v67l-37-2z" fill="url(#nozzle)" />
    <path d="m354 518 9-1 22 13h-31z" fill="#f0f5f7" />
    <path d="M558 493h60l105 1 60-3 100 28v28H540z" fill="url(#spine)" />

    {/* forward fuselage */}
    <path d="M1003 518q115 8 230 18v30q-30 5-62 8-27 4-54 5-22 3-43 3l-61-4z" fill="url(#chin)" />
    <path d="M745 493q115-9 229-16l25-3 170 26 64 16v20l-230-17q-120-9-243-20-8-2-15-6z" fill="url(#shoulder)" />
    <path d="M974 477l25-3 9 19 159 8 66 15v20l-185-14z" fill="url(#front)" />
    <path d="M391 573v-28h250l224-10h159l-12 48q-30 2-73 5-35 3-72 4-55 4-107 4-90 0-170-3-60-2-110-7-40-4-89-13z" fill="url(#belly)" />
    <path d="M780 541 865 535h159l-6 25q-120 12-238 16z" fill="url(#intake)" opacity=".5" />
    <path d="m371 546 30-2h17l-3 18-24 11v-18z" fill="#141414" />
    <path d="M720 494q140 14 283 25l21 16H845q-30-10-110-12h-15z" fill="url(#duct)" />
    <path d="m974 477 25-3 10 20-25 1z" fill="#747b76" />
    <path d="M999 475q20-8 40-11 25-4 49 0 15 3 29 10l21 11 29 16-14 2q-80-4-145-10z" fill="url(#glass)" />
    <ellipse cx="1105" cy="494" rx="38" ry="8" fill="url(#shine)" />
    <path d="m1168 500 64 16" stroke="#4c3d36" />
    <path d="m1233 517 40 11 33 13-73-5z" fill="url(#noseUp)" />
    <path d="m1233 536 73 5q-20 10-46 18l-27 7z" fill="url(#noseDown)" />

    {/* fin */}
    <path d="M427 374h67l79 152-182 3-28-12z" fill="url(#fin)" />
    <path d="M429 374h63" stroke="#4f6069" strokeWidth="2" />
    <path d="m452 394-59 134" stroke="#a7aaa9" strokeDasharray="1 1" />
    <path d="M419 392.500h10M447 393.500h5" stroke="#d4dadd" />

    {/* tailplane and wing */}
    <path d="m308 532 34-1 40-2 83-1 103-2q60-2 115-4h65l49 4 39 8 29 1-14 3-31 5-34 2H401l-44-1-20-3-29-2z" fill="#b4c3cc" />
    <path d="m315 538 30-3 37-2h71l34 4-38 5-50-1-53 1z" fill="#3a3c3b" />
    <path d="m487 537-38 4-35 3v1h20z" fill="#0c0c0c" />
    <path d="m541 537 80-9 104-4h34l38 4 35 6v3l-92 6-84 8-20-2-49-1-12-3z" fill="#3c3d3d" />
    <path d="m832 536-70 5-84 7-24 4h30l54-7z" fill="#121212" />
    <path d="M684 552 738 545h48l34-2 20-3-4 10-140 8z" fill="#323231" />
    <path d="m738 545 60-3 38-4 26-2-11 3-31 5-34 2z" fill="#c3ced5" />
    <path d="M577 545q80-5 130-9t110-2M625 532q60-5 130-2M640 546l130-9M700 526q80 0 110 8M586 531l30 6M346 540l34-1 20-1 36 2" stroke="#b6bfc3" strokeDasharray="8 6" strokeWidth=".9" />
    <path d="M740 524q60 2 102 13" stroke="#d9dfe2" strokeDasharray="3 2" strokeWidth="1.500" />
    <path d="M357 542q20-3 44 2-6 2-20 2-16 0-24-4z" fill="#9eadad" />
    <path d="M587 548q34-8 69 0-8 4-30 4z" fill="#94a3a1" />

    {/* panel seams */}
    <path d="M582.500 492v34M728.500 495v28M785.500 500v26M1079.500 505v19" stroke="#b2b9bc" />
    <path d="M568 511q60-1 120-4 60 3 138 13l123 7 15 8" stroke="#cfd4d6" strokeDasharray="9 8" />
    <path d="M584 521q70-4 140-3" stroke="#cfd4d6" strokeDasharray="14 12" />
    <path d="m834 505 56-5 6-9-5-7M973 476l5 8-2 6 8 8" stroke="#cdd2d3" />
    <path d="m986 498 62 5q50 5 108 4l77 9" stroke="#d9dede" strokeDasharray="8 6" />
    <path d="M1166 508v-5l4-3" stroke="#c5cacb" />
    <path d="M633 560.500h120.500V586" stroke="#c2c8ca" />
    <path d="M683 570h4v7h-4z" fill="#bcc8d0" />

    {/* servo horns and pins */}
    <path d="M495 535h14v6l8 2v4h-14l-8-3z" fill="#ef9f84" />
    <path d="M497 538h7v8l-1 12h-4v-10l-2-3zM408 545h5v5l-3 4zM406 555h9v4h-9zM646 551h4v7h-4z" fill="#eef1f2" />
    <path d="M497 541h6M410 548l2-2M647 554h2" stroke="#333" />

    {/* landing gear */}
    <path d="M715.500 575v47" stroke="#9da6aa" strokeWidth="2" />
    <circle cx="715.500" cy="640" r="20" fill="url(#tyre)" />
    <path d="M1042 578h8v16h-8z" fill="#0a25a8" />
    <path d="M1044.500 578v16" stroke="#1d50e0" strokeWidth="2" />
    <path d="M1045.500 594v26l-11 14" stroke="#8b8f90" strokeWidth="1.500" />
    <circle cx="1039" cy="616.500" r="7" stroke="#c4cdd3" />
    <circle cx="1039" cy="616.500" r="6" stroke="#5d5b59" strokeWidth=".6" />
    <circle cx="1024" cy="646.500" r="15" fill="url(#tyre)" />
  </svg>
);

const SideTools = () => (
  <aside className="w-[69px] shrink-0 bg-[#dbe9f2] overflow-hidden">
    <SideGrip className="w-full" />
    <div className="flex">
      <div className="w-[41px] shrink-0">
        {sideGroups.map((group, i) => (
          <Fragment key={i}>
            {i > 0 && <SideGrip />}
            {group.map(([label, icon]) => (
              <div key={label} className="flex items-center">
                <ToolButton label={label}><Svg>{side[icon]}</Svg></ToolButton>
                {icon === 'points' && <button type="button" aria-label="更多点工具" className="flex pl-0.5"><Arrow className="-rotate-90" /></button>}
              </div>
            ))}
          </Fragment>
        ))}
      </div>
      <div>
        <ToolButton label="镜像"><Svg>{side.mirror}</Svg></ToolButton>
        <ToolButton label="合并"><Svg>{side.merge}</Svg></ToolButton>
        <ToolButton label="修剪"><Svg>{side.trim}</Svg></ToolButton>
        <ToolButton label="阵列"><Svg>{side.pattern}</Svg></ToolButton>
      </div>
    </div>
  </aside>
);

const outline = '[text-shadow:1px_0_0_#000,-1px_0_0_#000,0_1px_0_#000,0_-1px_0_#000,1px_1px_0_#000,-1px_-1px_0_#000,1px_-1px_0_#000,-1px_1px_0_#000]';

const Taskbar = () => (
  <footer className="relative h-[30px] shrink-0 flex bg-linear-to-b from-[#4a8df2] via-[#245cdc] via-15% to-[#2052cf] text-white text-xs leading-4">
    <button type="button" className="w-[97px] shrink-0 mr-2.5 flex items-center gap-1.5 pl-2.5 rounded-r-xl bg-linear-to-b from-[#5fae5c] via-[#3a9038] via-25% to-[#2d7c2c] border-r border-[#1c5a2a]">
      <Svg>
        <path d="M2 3q4-2 7 0l-1 6q-3-2-7 0z" fill="#ef6a35" /><path d="M10 4q4 2 8 0l-1 6q-4 2-8 0z" fill="#8ccc4b" />
        <path d="M1 10q4-2 7 0l-1 6q-3-2-7 0z" fill="#5f9cf4" /><path d="M9 11q4 2 8 0l-1 6q-4 2-8 0z" fill="#fbd344" />
      </Svg>
      <span className="text-lg leading-6 italic [text-shadow:1px_1px_1px_#1d4d1d]">开始</span>
    </button>
    <div className="flex-1 min-w-0 flex items-stretch pt-1 pb-0.5">
      {tasks.map(([kind, text]) => (
        <button
          type="button"
          key={text}
          className={`w-40 min-w-0 flex items-center gap-2 pl-2 rounded-xs border border-[#2a5fd0] ${kind === 'asm' ? 'bg-[#1b4cb3]' : 'bg-linear-to-b from-[#5d9af8] via-[#3b7df0] via-20% to-[#3c80f4]'}`}
        >
          {kind === 'part' && <PartIcon />}
          {kind === 'asm' && <AsmIcon />}
          {kind === 'cad' && <span className="size-[15px] shrink-0 -mr-0.5 bg-[#2b8494] border border-white flex items-center justify-center font-bold">a</span>}
          <Mixed text={text} />
        </button>
      ))}
    </div>
    <div className="w-[59px] shrink-0 flex items-center justify-end pr-3 border-l border-[#1a4fb8] bg-linear-to-b from-[#35a6f5] via-[#1590ea] via-20% to-[#118ee8] text-[10px]">
      <button type="button" aria-label="显示隐藏的图标" className="absolute right-12 size-4 rounded-full bg-[#2d9bf0] flex items-center justify-center">
        <Svg size="12"><path d="m13 4-6 6 6 6" stroke="#fff" strokeWidth="3" /></Svg>
      </button>
      <time>15:53</time>
    </div>
    <div className={`absolute right-[15px] -top-2.5 flex flex-col items-center pointer-events-none ${outline}`}>
      <span className="whitespace-pre">我爱模型 玩家论坛</span>
      <span className="text-[10px] leading-[22px]">g5iMX.com</span>
    </div>
  </footer>
);

export default function App() {
  return (
    <div className="h-screen flex flex-col overflow-hidden [font-family:'Liberation_Mono','Noto_Sans_CJK_SC',monospace]">
      <TitleBar />
      <MenuBar />
      <Toolbar />
      <Messages />
      <div className="flex-1 min-h-0 flex">
        <ModelTree />
        <Splitter />
        <main className="flex-1 min-w-0 bg-linear-to-b from-[#c6daea] via-[#90aed2] via-50% to-[#5a7aa6]">
          <Aircraft />
        </main>
        <SideTools />
      </div>
      <Taskbar />
    </div>
  );
}
